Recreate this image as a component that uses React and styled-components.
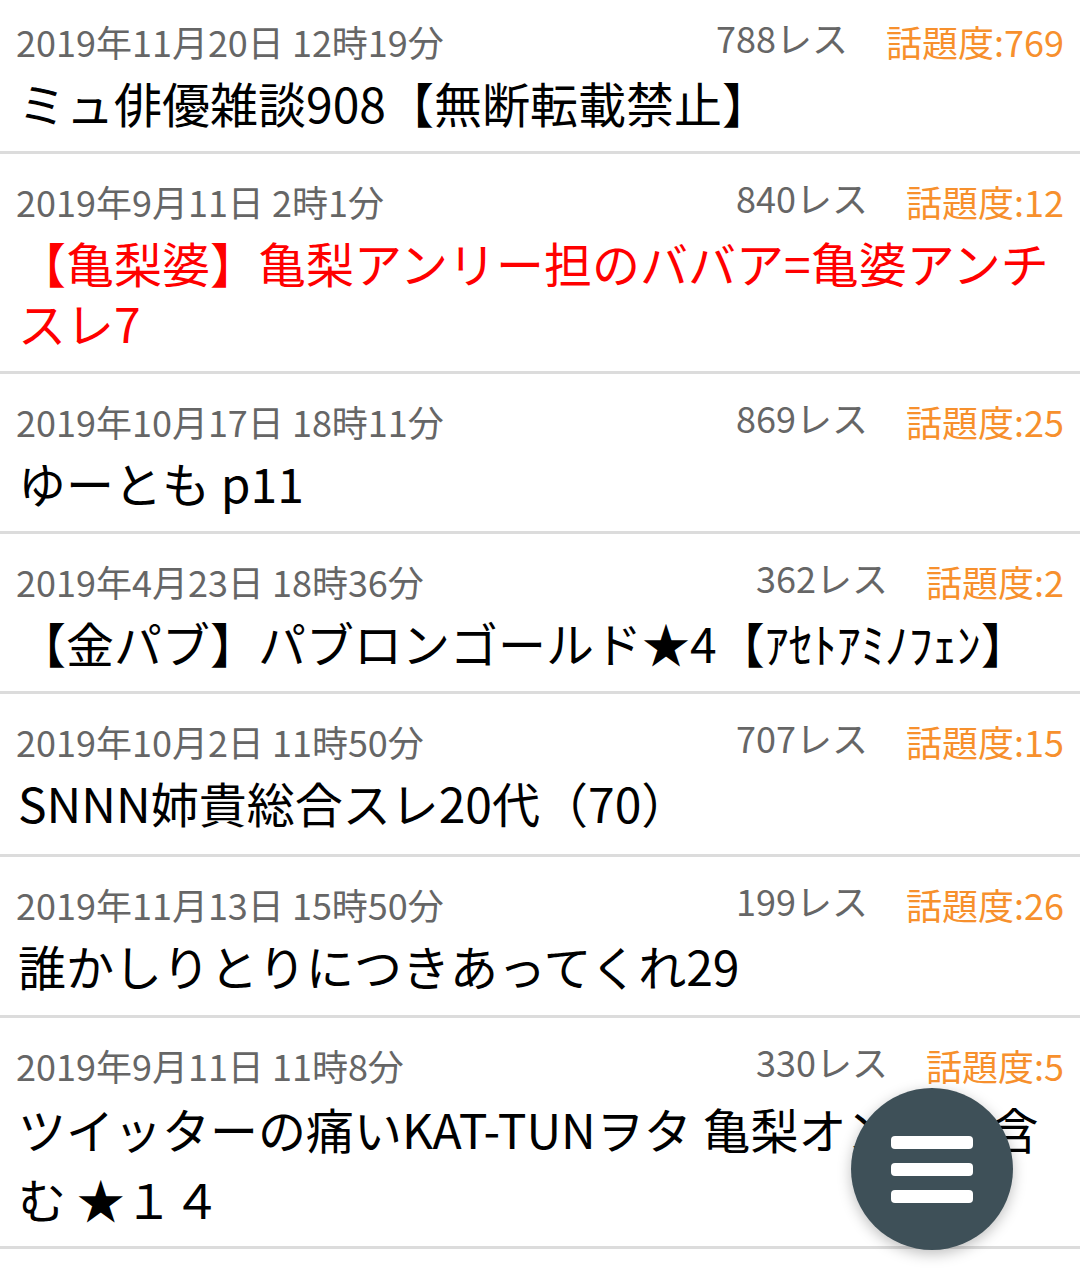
import React from 'react'
import styled, { createGlobalStyle } from 'styled-components'

const Global = createGlobalStyle`
  body {
    margin: 0;
    background: #fff;
    font-family: "Noto Sans CJK JP", "Noto Sans", sans-serif;
  }
`

const List = styled.ul`
  list-style: none;
  margin: -6px 0 0;
  padding: 0;
`

const Item = styled.li`
  padding: 25px 16px ${p => (p.$loose ? 12 : 19) + (p.$extra || 0)}px 18px;
  border-bottom: 3px solid #dcdcdc;
`

const Meta = styled.div`
  display: flex;
  align-items: center;
  height: 44px;
  font-size: 36px;
  line-height: 44px;
  color: #666;
`

const Date = styled.span`
  flex: 1;
  margin-left: -2px;
`

const Res = styled.span`
  padding-bottom: 8px;
  margin-right: 38px;
`

const Heat = styled.span`
  color: #f7902d;
`

const Title = styled.div`
  margin-top: ${p => (p.$loose ? 6 : 9)}px;
  font-size: 48px;
  line-height: ${p => (p.$loose ? 70 : 60)}px;
  color: ${p => (p.$hot ? '#ff0000' : '#000')};
`

const Fab = styled.button`
  position: fixed;
  right: 67px;
  bottom: 22px;
  width: 162px;
  height: 162px;
  border: none;
  border-radius: 50%;
  background: #3e5058;
  box-shadow: 0 4px 14px rgba(0, 0, 0, 0.25);
  display: flex;
  flex-direction: column;
  align-items: center;
  justify-content: center;
  gap: 14px;
  padding: 0;
`

const Bar = styled.span`
  display: block;
  width: 82px;
  height: 13px;
  border-radius: 4px;
  background: #fff;
`

const threads = [
  { date: '2019年11月20日 12時19分', res: 788, heat: 769, title: 'ミュ俳優雑談908【無断転載禁止】' },
  { date: '2019年9月11日 2時1分', res: 840, heat: 12, title: '【亀梨婆】亀梨アンリー担のババア=亀婆アンチスレ7', hot: true },
  { date: '2019年10月17日 18時11分', res: 869, heat: 25, title: 'ゆーとも p11' },
  { date: '2019年4月23日 18時36分', res: 362, heat: 2, title: '【金パブ】パブロンゴールド★4【ｱｾﾄｱﾐﾉﾌｪﾝ】' },
  { date: '2019年10月2日 11時50分', res: 707, heat: 15, title: 'SNNN姉貴総合スレ20代（70）', extra: 3 },
  { date: '2019年11月13日 15時50分', res: 199, heat: 26, title: '誰かしりとりにつきあってくれ29', extra: 1 },
  { date: '2019年9月11日 11時8分', res: 330, heat: 5, title: 'ツイッターの痛いKAT-TUNヲタ 亀梨オンリー含む ★１４', loose: true, extra: 1 },
]

const App = () => (
  <>
    <Global />
    <List>
      {threads.map((t, i) => (
        <Item key={i} $loose={t.loose} $extra={t.extra}>
          <Meta>
            <Date>{t.date}</Date>
            <Res>{t.res}レス</Res>
            <Heat>話題度:{t.heat}</Heat>
          </Meta>
          <Title $hot={t.hot} $loose={t.loose}>{t.title}</Title>
        </Item>
      ))}
    </List>
    <Fab aria-label="menu">
      <Bar />
      <Bar />
      <Bar />
    </Fab>
  </>
)

export default App
